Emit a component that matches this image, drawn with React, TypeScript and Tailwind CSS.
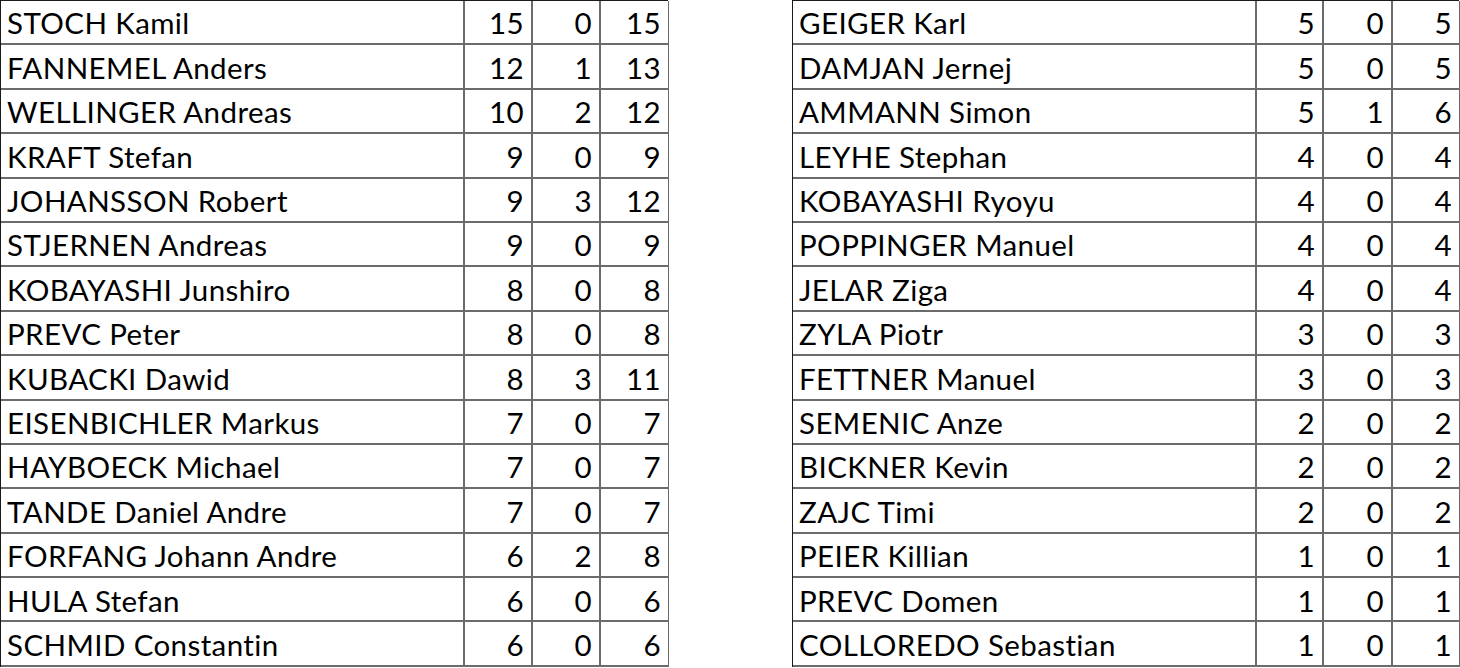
import React from "react";

type Row = [string, number, number, number];

const left: Row[] = [
  ["STOCH Kamil", 15, 0, 15],
  ["FANNEMEL Anders", 12, 1, 13],
  ["WELLINGER Andreas", 10, 2, 12],
  ["KRAFT Stefan", 9, 0, 9],
  ["JOHANSSON Robert", 9, 3, 12],
  ["STJERNEN Andreas", 9, 0, 9],
  ["KOBAYASHI Junshiro", 8, 0, 8],
  ["PREVC Peter", 8, 0, 8],
  ["KUBACKI Dawid", 8, 3, 11],
  ["EISENBICHLER Markus", 7, 0, 7],
  ["HAYBOECK Michael", 7, 0, 7],
  ["TANDE Daniel Andre", 7, 0, 7],
  ["FORFANG Johann Andre", 6, 2, 8],
  ["HULA Stefan", 6, 0, 6],
  ["SCHMID Constantin", 6, 0, 6],
];

const right: Row[] = [
  ["GEIGER Karl", 5, 0, 5],
  ["DAMJAN Jernej", 5, 0, 5],
  ["AMMANN Simon", 5, 1, 6],
  ["LEYHE Stephan", 4, 0, 4],
  ["KOBAYASHI Ryoyu", 4, 0, 4],
  ["POPPINGER Manuel", 4, 0, 4],
  ["JELAR Ziga", 4, 0, 4],
  ["ZYLA Piotr", 3, 0, 3],
  ["FETTNER Manuel", 3, 0, 3],
  ["SEMENIC Anze", 2, 0, 2],
  ["BICKNER Kevin", 2, 0, 2],
  ["ZAJC Timi", 2, 0, 2],
  ["PEIER Killian", 1, 0, 1],
  ["PREVC Domen", 1, 0, 1],
  ["COLLOREDO Sebastian", 1, 0, 1],
];

function Table({ rows, cols }: { rows: Row[]; cols: string }) {
  return (
    <div
      className={`grid ${cols} border-l border-t border-[#1a1a1a]`}
      style={{ gridTemplateRows: "repeat(15, 44.4px)" }}
    >
      {rows.map((r, i) => (
        <React.Fragment key={i}>
          <div className="flex items-center border-b-2 border-r-2 border-[#6b6b6b] pl-[6px] pt-[2px] text-[29.5px] leading-none tracking-[0.4px] text-black">
            {r[0]}
          </div>
          <div className="flex items-center justify-end border-b-2 border-r-2 border-[#6b6b6b] pr-[7px] pt-[2px] text-[29.5px] leading-none tracking-[0.4px] text-black">
            {r[1]}
          </div>
          <div className="flex items-center justify-end border-b-2 border-r-2 border-[#6b6b6b] pr-[7px] pt-[2px] text-[29.5px] leading-none tracking-[0.4px] text-black">
            {r[2]}
          </div>
          <div className="flex items-center justify-end border-b-2 border-r border-[#6b6b6b] pr-[7px] pt-[2px] text-[29.5px] leading-none tracking-[0.4px] text-black">
            {r[3]}
          </div>
        </React.Fragment>
      ))}
    </div>
  );
}

export default function App() {
  return (
    <div
      className="flex h-[668px] w-[1460px] bg-white"
      style={{ fontFamily: "Lato, 'Open Sans', sans-serif" }}
    >
      <div className="w-[668px]">
        <Table rows={left} cols="grid-cols-[464px_68px_68px_68px]" />
      </div>
      <div className="ml-[124px] w-[667px]">
        <Table rows={right} cols="grid-cols-[464px_67px_69px_67px]" />
      </div>
    </div>
  );
}
